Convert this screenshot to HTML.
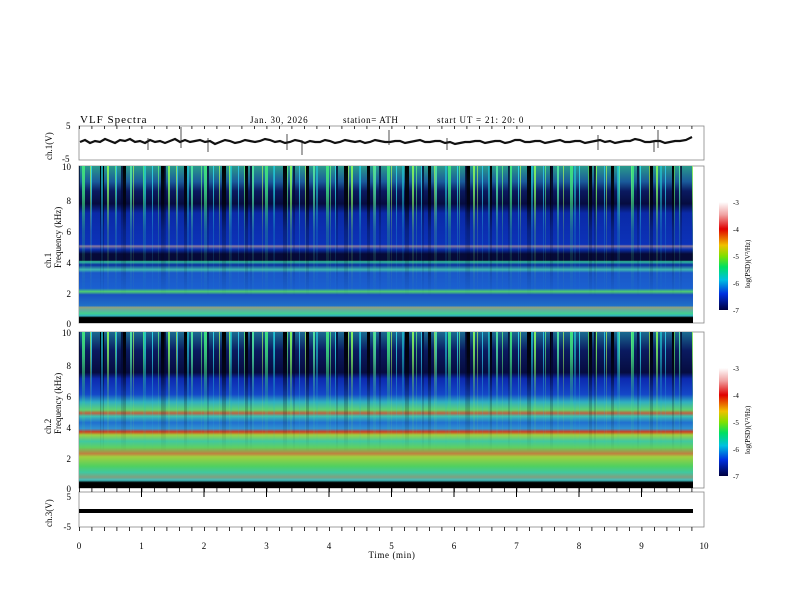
<!DOCTYPE html>
<html><head><meta charset="utf-8"><style>
html,body{margin:0;padding:0;background:#fff;width:792px;height:612px;overflow:hidden}
svg{display:block}
text{font-family:"Liberation Serif",serif;fill:#000}
</style></head><body>
<svg width="792" height="612" viewBox="0 0 792 612" xmlns="http://www.w3.org/2000/svg">
<defs>
<linearGradient id="g1" x1="0" y1="0" x2="0" y2="1">
<stop offset="0" stop-color="#2a9a8a"/>
<stop offset="0.1" stop-color="#1a5a9a"/>
<stop offset="0.16" stop-color="#0a1a60"/>
<stop offset="0.24" stop-color="#060c40"/>
<stop offset="0.3" stop-color="#0a2aa8"/>
<stop offset="0.5" stop-color="#0c32b8"/>
<stop offset="0.51" stop-color="#8a7aa0"/>
<stop offset="0.53" stop-color="#0c32b0"/>
<stop offset="0.56" stop-color="#060a38"/>
<stop offset="0.6" stop-color="#060a38"/>
<stop offset="0.61" stop-color="#30c0a0"/>
<stop offset="0.63" stop-color="#0a2aa0"/>
<stop offset="0.66" stop-color="#40b8b0"/>
<stop offset="0.68" stop-color="#1a58c8"/>
<stop offset="0.78" stop-color="#1a60d0"/>
<stop offset="0.8" stop-color="#50d070"/>
<stop offset="0.82" stop-color="#1a50c0"/>
<stop offset="0.89" stop-color="#2070c8"/>
<stop offset="0.9" stop-color="#90a080"/>
<stop offset="0.92" stop-color="#60b0a0"/>
<stop offset="0.94" stop-color="#40d090"/>
<stop offset="0.955" stop-color="#30b0c0"/>
<stop offset="0.965" stop-color="#000"/>
<stop offset="1" stop-color="#000"/>
</linearGradient>
<linearGradient id="g2" x1="0" y1="0" x2="0" y2="1">
<stop offset="0" stop-color="#1a6a90"/>
<stop offset="0.12" stop-color="#0a1a60"/>
<stop offset="0.26" stop-color="#060c40"/>
<stop offset="0.3" stop-color="#0c2ab0"/>
<stop offset="0.4" stop-color="#1448c8"/>
<stop offset="0.45" stop-color="#30b0c0"/>
<stop offset="0.5" stop-color="#60d070"/>
<stop offset="0.52" stop-color="#c06040"/>
<stop offset="0.54" stop-color="#40c0b0"/>
<stop offset="0.58" stop-color="#2070d0"/>
<stop offset="0.62" stop-color="#3090d0"/>
<stop offset="0.64" stop-color="#d04020"/>
<stop offset="0.66" stop-color="#a0d040"/>
<stop offset="0.7" stop-color="#40c8a0"/>
<stop offset="0.74" stop-color="#60d060"/>
<stop offset="0.78" stop-color="#c08040"/>
<stop offset="0.8" stop-color="#a0d040"/>
<stop offset="0.86" stop-color="#50d060"/>
<stop offset="0.9" stop-color="#40c8a0"/>
<stop offset="0.93" stop-color="#80a080"/>
<stop offset="0.95" stop-color="#40c0c0"/>
<stop offset="0.965" stop-color="#000"/>
<stop offset="1" stop-color="#000"/>
</linearGradient>
<linearGradient id="fade" x1="0" y1="0" x2="0" y2="1">
<stop offset="0" stop-color="#fff" stop-opacity="1"/>
<stop offset="0.2" stop-color="#fff" stop-opacity="0.8"/>
<stop offset="0.5" stop-color="#fff" stop-opacity="0.25"/>
<stop offset="1" stop-color="#fff" stop-opacity="0"/>
</linearGradient>
<mask id="m1"><rect x="79" y="166" width="614" height="130" fill="url(#fade)"/></mask>
<mask id="m2"><rect x="79" y="332" width="614" height="120" fill="url(#fade)"/></mask>
<pattern id="s1" x="79" y="0" width="61" height="612" patternUnits="userSpaceOnUse">
<rect x="3" y="0" width="3" height="612" fill="#40e080"/>
<rect x="12" y="0" width="1" height="612" fill="#30d0e0"/>
<rect x="21" y="0" width="4" height="612" fill="#000"/>
<rect x="28" y="0" width="2" height="612" fill="#80f060"/>
<rect x="37" y="0" width="1" height="612" fill="#30c0e0"/>
<rect x="44" y="0" width="3" height="612" fill="#000"/>
<rect x="51" y="0" width="2" height="612" fill="#50e0a0"/>
</pattern>
<pattern id="s2" x="85" y="0" width="43" height="612" patternUnits="userSpaceOnUse">
<rect x="5" y="0" width="1" height="612" fill="#a0f060"/>
<rect x="16" y="0" width="2" height="612" fill="#20c0d0"/>
<rect x="30" y="0" width="1" height="612" fill="#60f080"/>
<rect x="36" y="0" width="2" height="612" fill="#020630"/>
</pattern>
<pattern id="tx" x="79" y="0" width="12.5" height="612" patternUnits="userSpaceOnUse"><rect x="0" y="0" width="0.8" height="612" fill="#000"/></pattern>
</defs>

<text x="80" y="123" font-size="11" letter-spacing="1">VLF  Spectra</text>
<text x="250" y="123" font-size="9" letter-spacing="0.8">Jan. 30, 2026</text>
<text x="343" y="123" font-size="9" letter-spacing="0.6">station= ATH</text>
<text x="437" y="123" font-size="9" letter-spacing="0.8">start  UT  =    21: 20: 0</text>

<rect x="79" y="126" width="625" height="34" fill="#fff" stroke="#888" stroke-width="0.8"/>
<polyline fill="none" stroke="#111" stroke-width="2.2" points="80,142 85,140 90,143 95,141 100,142 105,139 110,141 115,143 120,140 125,141 130,139 135,142 140,141 145,143 150,140 155,142 160,141 165,143 170,141 175,139 180,142 185,140 190,142 195,141 200,140 205,142 210,141 215,144 220,142 225,140 230,141 235,143 240,142 245,140 250,141 255,142 260,141 265,139 270,140 275,142 280,141 285,143 290,142 295,140 300,141 305,143 310,141 315,142 320,142 325,140 330,141 335,143 340,142 345,140 350,141 355,142 360,141 365,143 370,142 375,140 380,141 385,142 390,142 395,141 400,141 405,143 410,142 415,141 420,140 425,142 430,142 435,141 440,141 445,143 450,142 455,144 460,143 465,142 470,142 475,141 480,141 485,143 490,142 495,141 500,141 505,143 510,142 515,140 520,140 525,142 530,142 535,141 540,141 545,143 550,142 555,141 560,140 565,142 570,142 575,141 580,141 585,143 590,142 595,141 600,140 605,142 610,141 615,143 620,142 625,141 630,141 635,139 640,140 645,142 650,142 655,141 660,141 665,143 670,142 675,141 680,141 686,140 692,137"/>
<g stroke="#222" stroke-width="0.8">
<line x1="181" y1="127" x2="181" y2="148"/><line x1="148" y1="138" x2="148" y2="150"/><line x1="208" y1="138" x2="208" y2="152"/><line x1="287" y1="134" x2="287" y2="150"/><line x1="302" y1="140" x2="302" y2="155"/><line x1="389" y1="130" x2="389" y2="145"/><line x1="447" y1="138" x2="447" y2="150"/><line x1="598" y1="135" x2="598" y2="150"/><line x1="658" y1="130" x2="658" y2="148"/><line x1="654" y1="140" x2="654" y2="152"/>
</g>
<text x="0" y="0" font-size="9" transform="translate(52,160) rotate(-90)">ch.1(V)</text>
<text x="66" y="129" font-size="9">5</text>
<text x="62" y="162" font-size="9">-5</text>

<rect x="79" y="166" width="625" height="157" fill="#fff" stroke="#888" stroke-width="0.8"/>
<rect x="79" y="166" width="614" height="157" fill="url(#g1)"/>
<g mask="url(#m1)"><rect x="79" y="166" width="614" height="130" fill="url(#s1)"/><rect x="79" y="166" width="614" height="130" fill="url(#s2)" opacity="0.8"/></g>
<rect x="79" y="332" width="625" height="156" fill="#fff" stroke="#888" stroke-width="0.8"/>
<rect x="79" y="332" width="614" height="156" fill="url(#g2)"/>
<g mask="url(#m2)"><rect x="79" y="332" width="614" height="120" fill="url(#s1)"/><rect x="79" y="332" width="614" height="120" fill="url(#s2)" opacity="0.8"/></g>

<g font-size="9" text-anchor="end">
<text x="71" y="170">10</text><text x="71" y="204">8</text><text x="71" y="235">6</text><text x="71" y="266">4</text><text x="71" y="297">2</text><text x="71" y="327">0</text>
<text x="71" y="336">10</text><text x="71" y="369">8</text><text x="71" y="400">6</text><text x="71" y="431">4</text><text x="71" y="462">2</text><text x="71" y="492">0</text>
<text x="71" y="500">5</text><text x="71" y="530">-5</text>
</g>
<text font-size="9" transform="translate(51,268) rotate(-90)">ch.1</text>
<text font-size="9" transform="translate(61,268) rotate(-90)">Frequency  (kHz)</text>
<text font-size="9" transform="translate(51,434) rotate(-90)">ch.2</text>
<text font-size="9" transform="translate(61,434) rotate(-90)">Frequency  (kHz)</text>

<rect x="79" y="492" width="625" height="35" fill="#fff" stroke="#888" stroke-width="0.8"/>
<rect x="79" y="509" width="614" height="4" fill="#000"/>
<text font-size="9" transform="translate(52,527) rotate(-90)">ch.3(V)</text>

<rect x="79" y="527" width="625" height="4" fill="url(#tx)"/>
<rect x="79" y="488" width="625" height="4" fill="url(#tx)"/>
<rect x="79" y="126" width="625" height="3" fill="url(#tx)"/>
<g stroke="#000" stroke-width="1">
<line x1="141.5" y1="488" x2="141.5" y2="497"/><line x1="204" y1="488" x2="204" y2="497"/><line x1="266.5" y1="488" x2="266.5" y2="497"/><line x1="329" y1="488" x2="329" y2="497"/><line x1="391.5" y1="488" x2="391.5" y2="497"/><line x1="454" y1="488" x2="454" y2="497"/><line x1="516.5" y1="488" x2="516.5" y2="497"/><line x1="579" y1="488" x2="579" y2="497"/><line x1="641.5" y1="488" x2="641.5" y2="497"/>
</g>
<g font-size="9" text-anchor="middle">
<text x="79" y="549">0</text><text x="141.5" y="549">1</text><text x="204" y="549">2</text><text x="266.5" y="549">3</text><text x="329" y="549">4</text><text x="391.5" y="549">5</text><text x="454" y="549">6</text><text x="516.5" y="549">7</text><text x="579" y="549">8</text><text x="641.5" y="549">9</text><text x="704" y="549">10</text>
<text x="392" y="558" letter-spacing="0.6">Time  (min)</text>
</g>

<defs>
<linearGradient id="cb" x1="0" y1="0" x2="0" y2="1">
<stop offset="0" stop-color="#fff"/>
<stop offset="0.12" stop-color="#f0a0a0"/>
<stop offset="0.25" stop-color="#e00000"/>
<stop offset="0.4" stop-color="#f0c000"/>
<stop offset="0.5" stop-color="#80e000"/>
<stop offset="0.6" stop-color="#00e060"/>
<stop offset="0.72" stop-color="#00c0e0"/>
<stop offset="0.85" stop-color="#0030e0"/>
<stop offset="1" stop-color="#000040"/>
</linearGradient>
</defs>
<rect x="719" y="202" width="9" height="108" fill="url(#cb)"/>
<rect x="719" y="368" width="9" height="108" fill="url(#cb)"/>
<g font-size="7">
<text x="733" y="205">-3</text><text x="733" y="232">-4</text><text x="733" y="259">-5</text><text x="733" y="286">-6</text><text x="733" y="313">-7</text>
<text x="733" y="371">-3</text><text x="733" y="398">-4</text><text x="733" y="425">-5</text><text x="733" y="452">-6</text><text x="733" y="479">-7</text>
</g>
<text font-size="7" transform="translate(750,288) rotate(-90)">log(PSD)(V²/Hz)</text>
<text font-size="7" transform="translate(750,454) rotate(-90)">log(PSD)(V²/Hz)</text>
</svg>
</body></html>
